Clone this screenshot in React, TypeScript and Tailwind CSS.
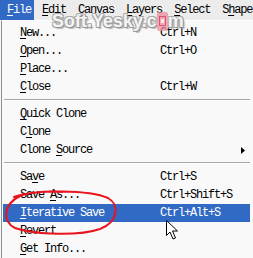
import React from "react";

const mono = "font-['Liberation_Mono',monospace] text-[12px] tracking-[-1.2px]";

function Label({ text, u }: { text: string; u: number }) {
  return (
    <span>
      {text.slice(0, u)}
      <span className="underline underline-offset-[2px] decoration-1">{text[u]}</span>
      {text.slice(u + 1)}
    </span>
  );
}

type Item = { t: string; u: number; s?: string; sub?: boolean; hl?: boolean } | "sep";

const items: Item[] = [
  { t: "New...", u: 0, s: "Ctrl+N" },
  { t: "Open...", u: 0, s: "Ctrl+O" },
  { t: "Place...", u: 0 },
  { t: "Close", u: 0, s: "Ctrl+W" },
  "sep",
  { t: "Quick Clone", u: 0 },
  { t: "Clone", u: 1 },
  { t: "Clone Source", u: 6, sub: true },
  "sep",
  { t: "Save", u: 2, s: "Ctrl+S" },
  { t: "Save As...", u: 5, s: "Ctrl+Shift+S" },
  { t: "Iterative Save", u: 0, s: "Ctrl+Alt+S", hl: true },
  { t: "Revert", u: 0 },
  { t: "Get Info...", u: 0 },
];

export default function App() {
  return (
    <div className={`relative w-[253px] h-[258px] overflow-hidden bg-[#f9f9f9] text-black ${mono}`}>
      {/* menu bar */}
      <div className="flex h-[20px] items-center bg-[#ececec] leading-[20px]">
        <div className="h-[20px] bg-[#316ac5] pl-[7px] pr-[3px] text-white">
          <Label text="File" u={0} />
        </div>
        <div className="ml-[8px] flex gap-[12px]">
          <Label text="Edit" u={0} />
          <Label text="Canvas" u={0} />
          <Label text="Layers" u={0} />
          <Label text="Select" u={0} />
          <Label text="Shape" u={1} />
        </div>
      </div>
      {/* dropdown */}
      <div className="ml-[1px] border-l border-t border-l-[#8f8f8f] border-t-white bg-[#f9f9f9] pt-[3px] pl-[1px] pr-[3px]">
        {items.map((it, i) =>
          it === "sep" ? (
            <div key={i} className="h-[9px] pt-[3px] pl-[1px]">
              <div className="h-px bg-[#a7a7a7]" />
              <div className="h-px bg-white" />
            </div>
          ) : (
            <div
              key={i}
              className={`flex h-[18px] items-center leading-[18px] ${it.hl ? "bg-[#316ac5] text-white" : ""}`}
            >
              <div className="w-[157px] shrink-0 pl-[17px] whitespace-pre">
                <Label text={it.t} u={it.u} />
              </div>
              <div className="whitespace-pre">{it.s ?? ""}</div>
              {it.sub && (
                <svg className="ml-auto mr-[5px]" width="4" height="7" viewBox="0 0 4 7">
                  <path d="M0 0 L4 3.5 L0 7 Z" fill="#000" />
                </svg>
              )}
            </div>
          )
        )}
      </div>

      {/* watermark */}
      <div className="pointer-events-none absolute left-[52px] top-[11px] flex items-center font-['Liberation_Sans',sans-serif] text-[18px] font-bold tracking-normal text-white/90 leading-[20px] opacity-90 [text-shadow:1px_1px_0_#8c8c8c,-1px_-1px_0_#a8a8a8,1px_-1px_0_#9c9c9c,-1px_1px_0_#9c9c9c,2px_2px_1px_#b4b4b4]">
        <span>Soft.Yesky.c</span>
        <span className="relative inline-block h-[19px] w-[11px] rounded-[2px] bg-[#f08a9a]/80">
          <span className="absolute left-[2px] top-[4px] h-[10px] w-[7px] border border-[#d03050]/80" />
          <span className="absolute left-[4px] top-[7px] h-[4px] w-[3px] bg-white/70" />
        </span>
        <span>m</span>
      </div>

      {/* red ellipse + cursor */}
      <svg className="pointer-events-none absolute left-0 top-0" width="253" height="258">
        <path
          d="M14 197 C 35 189, 90 190, 108 198 C 120 205, 118 222, 100 229 C 80 236, 35 235, 15 228 C 3 222, 2 205, 20 196 C 30 192, 50 191, 62 192"
          fill="none"
          stroke="#e8141e"
          strokeWidth="2"
          strokeLinecap="round"
        />
        <path
          d="M166.5 220.5 L166.5 235.5 L170 232 L173 239 L175.5 238 L172.5 231 L177.5 231 Z"
          fill="#fff"
          stroke="#000"
          strokeWidth="1"
          strokeLinejoin="miter"
        />
      </svg>
    </div>
  );
}
